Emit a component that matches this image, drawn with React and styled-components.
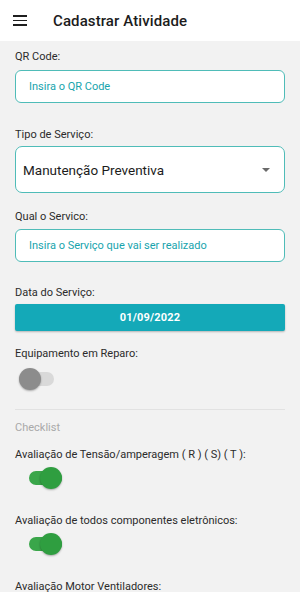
import React from 'react';
import styled, { createGlobalStyle } from 'styled-components';

const GlobalStyle = createGlobalStyle`
  html, body {
    margin: 0;
    padding: 0;
    background: #f2f2f2;
    font-family: Roboto, "Liberation Sans", sans-serif;
  }
`;

const Screen = styled.div`
  width: 300px;
  min-height: 592px;
  background: #f2f2f2;
`;

const Header = styled.div`
  height: 41px;
  background: #ffffff;
  display: flex;
  align-items: center;
  padding: 0 13px;
  box-sizing: border-box;
`;

const MenuButton = styled.div`
  width: 14px;
  display: flex;
  flex-direction: column;
  gap: 3px;
  margin-right: 26px;

  span {
    display: block;
    height: 1.6px;
    background: #1f1f1f;
  }
`;

const Title = styled.h1`
  margin: 0;
  font-size: 15px;
  font-weight: 500;
  color: #1c1c1c;
  letter-spacing: 0.1px;
`;

const Content = styled.div`
  padding: 9px 15px 0;
`;

const Field = styled.div`
  margin-top: ${p => p.$top || 0}px;
`;

const Label = styled.div`
  font-size: 11px;
  line-height: 14px;
  color: ${p => (p.$muted ? '#a9a9a9' : '#2b2b2b')};
  margin-bottom: ${p => p.$gap ?? 5}px;
`;

const TextInput = styled.div`
  height: 33px;
  box-sizing: border-box;
  border: 1px solid #4fbcb8;
  border-radius: 6px;
  background: #ffffff;
  display: flex;
  align-items: center;
  padding: 0 13px;
  font-size: 11px;
  color: #17a4ad;
`;

const Select = styled.div`
  height: 47px;
  box-sizing: border-box;
  border: 1px solid #4fbcb8;
  border-radius: 7px;
  background: #ffffff;
  display: flex;
  align-items: center;
  justify-content: space-between;
  padding: 0 14px 0 7px;
  font-size: 13.5px;
  color: #1c1c1c;
`;

const Caret = styled.span`
  width: 0;
  height: 0;
  border-left: 4px solid transparent;
  border-right: 4px solid transparent;
  border-top: 4px solid #6a6a6a;
`;

const DateButton = styled.div`
  height: 27px;
  background: #14a9b8;
  border-radius: 2px;
  box-shadow: 0 1px 2px rgba(0, 0, 0, 0.25);
  display: flex;
  align-items: center;
  justify-content: center;
  font-size: 11px;
  font-weight: 700;
  color: #ffffff;
  letter-spacing: 0.2px;
`;

const Divider = styled.div`
  height: 1px;
  background: #e2e2e2;
  margin-top: ${p => p.$top || 0}px;
`;

const SwitchWrap = styled.div`
  position: relative;
  width: 35px;
  height: 22px;
  margin-left: ${p => p.$left || 4}px;
`;

const Track = styled.div`
  position: absolute;
  left: 2px;
  right: 0;
  top: 4px;
  height: 14px;
  border-radius: 7px;
  background: ${p => (p.$on ? '#3aa64a' : '#d9d9d9')};
`;

const Thumb = styled.div`
  position: absolute;
  top: 0;
  left: ${p => (p.$on ? '13px' : '0')};
  width: 22px;
  height: 22px;
  border-radius: 50%;
  background: ${p => (p.$on ? '#2f9e40' : '#8c8c8c')};
  box-shadow: 0 1px 2px rgba(0, 0, 0, 0.3);
`;

function Switch({ on, left }) {
  return (
    <SwitchWrap $left={left}>
      <Track $on={on} />
      <Thumb $on={on} />
    </SwitchWrap>
  );
}

export default function App() {
  return (
    <Screen>
      <GlobalStyle />
      <Header>
        <MenuButton>
          <span />
          <span />
          <span />
        </MenuButton>
        <Title>Cadastrar Atividade</Title>
      </Header>
      <Content>
        <Field>
          <Label $gap={6}>QR Code:</Label>
          <TextInput>Insira o QR Code</TextInput>
        </Field>
        <Field $top={25}>
          <Label $gap={4}>Tipo de Serviço:</Label>
          <Select>
            Manutenção Preventiva
            <Caret />
          </Select>
        </Field>
        <Field $top={17}>
          <Label>Qual o Servico:</Label>
          <TextInput>Insira o Serviço que vai ser realizado</TextInput>
        </Field>
        <Field $top={24}>
          <Label $gap={4}>Data do Serviço:</Label>
          <DateButton>01/09/2022</DateButton>
        </Field>
        <Field $top={16}>
          <Label $gap={7}>Equipamento em Reparo:</Label>
          <Switch on={false} left={4} />
        </Field>
        <Divider $top={19} />
        <Field $top={11}>
          <Label $muted $gap={13}>Checklist</Label>
          <Label $gap={5}>Avaliação de Tensão/amperagem ( R ) ( S) ( T ):</Label>
          <Switch on left={12} />
        </Field>
        <Field $top={25}>
          <Label $gap={5}>Avaliação de todos componentes eletrônicos:</Label>
          <Switch on left={12} />
        </Field>
        <Field $top={25}>
          <Label>Avaliação Motor Ventiladores:</Label>
        </Field>
      </Content>
    </Screen>
  );
}
